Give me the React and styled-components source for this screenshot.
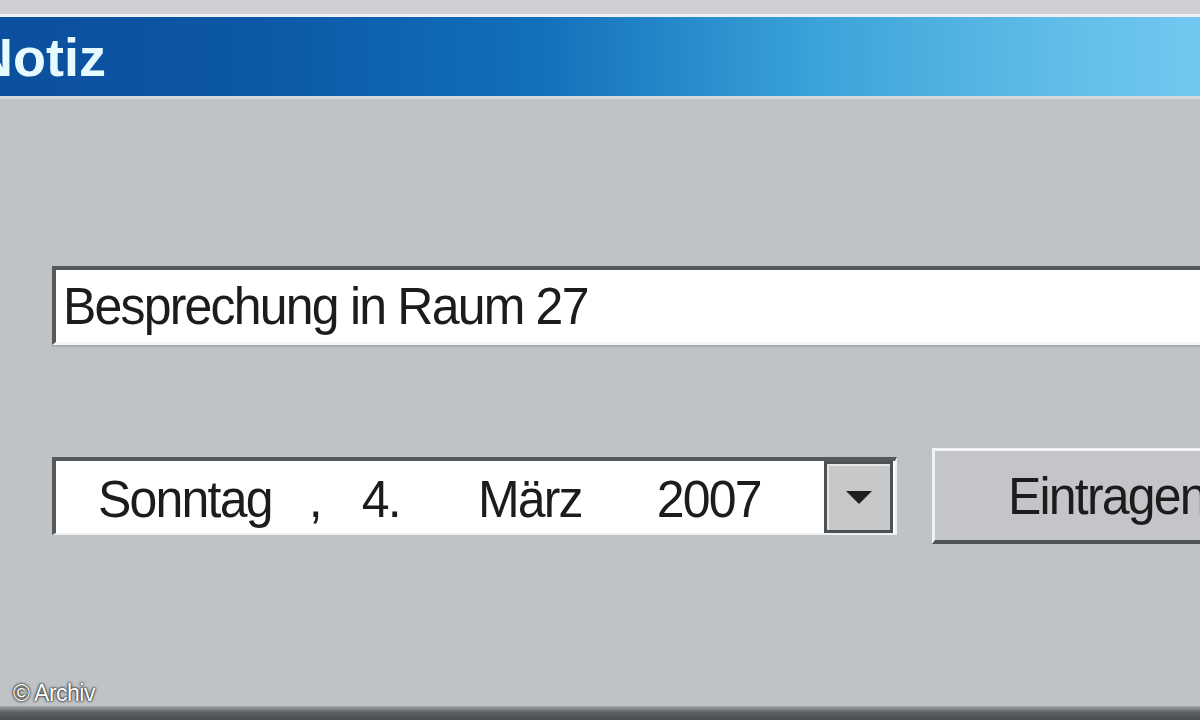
import React from "react";
import styled, { createGlobalStyle } from "styled-components";

const GlobalStyle = createGlobalStyle`
  html, body {
    margin: 0;
    padding: 0;
    background: #c0c3c6;
  }
  * {
    box-sizing: border-box;
  }
`;

const Window = styled.div`
  position: relative;
  width: 1200px;
  height: 720px;
  overflow: hidden;
  display: flex;
  flex-direction: column;
  background: #c0c3c6;
  font-family: "Liberation Sans", Arial, sans-serif;
`;

const TopStrip = styled.div`
  height: 17px;
  background: #cdcfd2;
  border-bottom: 3px solid #eef0f3;
  flex-shrink: 0;
`;

const TitleBar = styled.div`
  height: 82px;
  flex-shrink: 0;
  display: flex;
  align-items: center;
  padding-top: 1px;
  background: linear-gradient(
    90deg,
    #0b4f9e 0%,
    #0c58a6 22%,
    #1270bb 45%,
    #3aa3d9 68%,
    #5cb9e6 85%,
    #72c8f0 100%
  );
  border-bottom: 3px solid #d6dadf;
`;

const Title = styled.span`
  margin-left: -26px;
  font-family: "Liberation Sans", Arial, sans-serif;
  font-weight: bold;
  font-size: 54px;
  color: #e6fbff;
`;

const Body = styled.div`
  flex: 1;
  display: flex;
  flex-direction: column;
  padding: 167px 0 0 52px;
`;

const TextBox = styled.div`
  width: 1200px;
  height: 79px;
  flex-shrink: 0;
  display: flex;
  align-items: center;
  background: #fff;
  border-top: 4px solid #56595c;
  border-left: 4px solid #56595c;
  border-bottom: 3px solid #f6f6f6;
  box-shadow: 0 2px 0 #a9acaf;
  padding: 0 0 0 7px;
`;

const FieldText = styled.span`
  display: inline-block;
  font-size: 50px;
  letter-spacing: -1.8px;
  color: #1c1c1c;
  white-space: pre;
  transform: scaleY(1.05);
`;

const DateRow = styled.div`
  display: flex;
  align-items: center;
  margin-top: 103px;
`;

const DateBox = styled.div`
  width: 845px;
  height: 78px;
  flex-shrink: 0;
  display: flex;
  align-items: center;
  background: #fff;
  border-top: 4px solid #56595c;
  border-left: 4px solid #56595c;
  border-right: 2px solid #eef0f2;
  border-bottom: 2px solid #eef0f2;
  padding: 4px 2px 0 42px;
`;

const Segment = styled(FieldText)`
  margin-left: ${(p) => p.$gap || 0}px;
`;

const DropButton = styled.div`
  margin: -4px 0 0 auto;
  width: 69px;
  height: 72px;
  display: flex;
  align-items: center;
  justify-content: center;
  background: #c6c8ca;
  border: 3px solid #4e5154;
  box-shadow: inset 2px 2px 0 #e2e4e6;
`;

const ActionButton = styled.div`
  margin-left: 35px;
  width: 320px;
  height: 96px;
  flex-shrink: 0;
  display: flex;
  align-items: center;
  padding-left: 73px;
  background: #c3c5c8;
  border-top: 3px solid #f2f3f5;
  border-left: 3px solid #f2f3f5;
  border-bottom: 4px solid #505356;
`;

const Footer = styled.div`
  margin-top: auto;
  height: 14px;
  background: linear-gradient(180deg, #a4a7aa 0%, #5c6064 45%, #4a4e52 100%);
`;

const Credit = styled.span`
  position: absolute;
  left: 13px;
  bottom: 13px;
  font-size: 23px;
  color: #fff;
  letter-spacing: -0.5px;
  text-shadow: 0 0 3px #222, 0 0 2px #333, 0 0 1px #333;
`;

const App = () => {
  return (
    <Window>
      <GlobalStyle />
      <TopStrip />
      <TitleBar>
        <Title>Notiz</Title>
      </TitleBar>
      <Body>
        <TextBox>
          <FieldText>Besprechung in Raum 27</FieldText>
        </TextBox>
        <DateRow>
          <DateBox>
            <Segment>Sonntag</Segment>
            <Segment $gap={37}>,</Segment>
            <Segment $gap={41}>4.</Segment>
            <Segment $gap={78}>März</Segment>
            <Segment $gap={75}>2007</Segment>
            <DropButton>
              <svg width="28" height="15" viewBox="0 0 28 15">
                <path d="M1 1 H27 L14 14 Z" fill="#1e1e1e" />
              </svg>
            </DropButton>
          </DateBox>
          <ActionButton>
            <FieldText>Eintragen</FieldText>
          </ActionButton>
        </DateRow>
      </Body>
      <Footer />
      <Credit>© Archiv</Credit>
    </Window>
  );
};

export default App;
